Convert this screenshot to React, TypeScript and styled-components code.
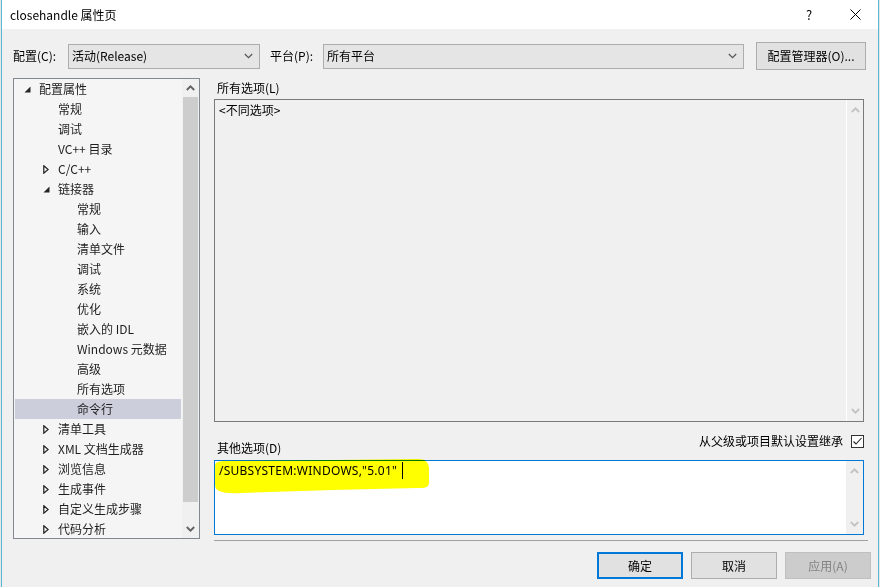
import React from 'react';
import styled, { createGlobalStyle } from 'styled-components';

const GlobalStyle = createGlobalStyle`
  html, body {
    margin: 0;
    padding: 0;
    background: #e6e6e6;
  }
  body {
    font-family: "Noto Sans CJK SC", "Noto Sans", sans-serif;
    font-size: 12px;
    color: #000;
  }
`;

const Screen = styled.div`
  width: 880px;
  height: 587px;
  overflow: hidden;
  display: flex;
  background: #e6e6e6;
`;

const Window = styled.div`
  margin-left: 1px;
  width: 878px;
  height: 587px;
  box-sizing: border-box;
  border-left: 1px solid #5ab7d8;
  border-right: 1px solid #5ab7d8;
  display: flex;
  flex-direction: column;
  background: #f0f0f0;
`;

const TitleBar = styled.div`
  height: 29px;
  flex-shrink: 0;
  background: #fff;
  display: flex;
  align-items: center;
  padding-left: 8px;
`;

const Title = styled.span`
  flex: 1;
  line-height: 18px;
  color: #000;
`;

const CaptionButton = styled.div`
  width: 46px;
  height: 29px;
  display: flex;
  align-items: center;
  justify-content: center;
  font-size: 13px;
  color: #000;
`;

const Body = styled.div`
  flex: 1;
  padding: 13px 7px 0 11px;
`;

const TopRow = styled.div`
  display: flex;
  align-items: center;
  height: 28px;
`;

const FieldLabel = styled.span<{ $w: number; $ml?: number }>`
  width: ${(p) => p.$w}px;
  margin-left: ${(p) => p.$ml || 0}px;
  line-height: 18px;
`;

const Combo = styled.div<{ $w: number }>`
  width: ${(p) => p.$w}px;
  height: 25px;
  box-sizing: border-box;
  border: 1px solid #adadad;
  background: #e5e5e5;
  display: flex;
  align-items: center;
  padding: 0 6px 0 3px;
  line-height: 18px;

  span {
    flex: 1;
  }
`;

const PushButton = styled.div<{ $w: number; $h: number; $primary?: boolean; $disabled?: boolean }>`
  width: ${(p) => p.$w}px;
  height: ${(p) => p.$h}px;
  box-sizing: border-box;
  border: ${(p) => (p.$primary ? '2px solid #0078d7' : p.$disabled ? '1px solid #bfbfbf' : '1px solid #adadad')};
  background: ${(p) => (p.$disabled ? '#cccccc' : '#e1e1e1')};
  color: ${(p) => (p.$disabled ? '#838383' : '#000')};
  display: flex;
  align-items: center;
  justify-content: center;
  line-height: 18px;
`;

const Main = styled.div`
  display: flex;
  gap: 14px;
  margin-top: 8px;
`;

const Tree = styled.div`
  width: 187px;
  height: 461px;
  box-sizing: border-box;
  border: 1px solid #828790;
  background: #f5f5f5;
  display: flex;
`;

const TreeList = styled.div`
  flex: 1;
  padding: 0 1px;
  overflow: hidden;
`;

const TreeRow = styled.div<{ $level: number; $selected?: boolean }>`
  height: 20px;
  display: flex;
  align-items: center;
  padding-left: ${(p) => 9 + p.$level * 19}px;
  background: ${(p) => (p.$selected ? '#cccedb' : 'transparent')};
  color: #1e1e1e;
  line-height: 20px;
  white-space: nowrap;
`;

const Expander = styled.span`
  width: 15px;
  height: 20px;
  display: flex;
  align-items: center;
  flex-shrink: 0;
`;

const ScrollBar = styled.div<{ $light?: boolean }>`
  width: 17px;
  flex-shrink: 0;
  box-sizing: border-box;
  background: #f0f0f0;
  display: flex;
  flex-direction: column;
  border-left: ${(p) => (p.$light ? '1px solid #fff' : 'none')};
`;

const ScrollArrow = styled.div`
  height: 20px;
  flex-shrink: 0;
  display: flex;
  align-items: center;
  justify-content: center;
`;

const Thumb = styled.div`
  height: 405px;
  margin: 0 1px 0 1px;
  background: #cdcdcd;
`;

const Spacer = styled.div`
  flex: 1;
`;

const RightCol = styled.div`
  width: 650px;
  display: flex;
  flex-direction: column;
`;

const SectionLabel = styled.div`
  height: 21px;
  box-sizing: border-box;
  padding: 1px 0 0 3px;
  line-height: 18px;
`;

const EditBox = styled.div<{ $h: number; $focused?: boolean }>`
  position: relative;
  height: ${(p) => p.$h}px;
  box-sizing: border-box;
  border: 1px solid ${(p) => (p.$focused ? '#0078d7' : '#7a7a7a')};
  background: ${(p) => (p.$focused ? '#fff' : '#f0f0f0')};
  display: flex;
`;

const EditText = styled.div<{ $latin?: boolean }>`
  flex: 1;
  padding: 1px 0 0 4px;
  line-height: 18px;
  white-space: nowrap;
  letter-spacing: ${(p) => (p.$latin ? '0.25px' : '0')};
  font-family: ${(p) => (p.$latin ? '"Noto Sans", "Noto Sans CJK SC", sans-serif' : 'inherit')};
`;

const Caret = styled.span`
  display: inline-block;
  width: 1px;
  height: 17px;
  margin-left: 5px;
  vertical-align: -4px;
  background: #000;
`;

const Highlight = styled.svg`
  position: absolute;
  left: -2px;
  top: -3px;
  pointer-events: none;
  mix-blend-mode: multiply;
  z-index: 2;
`;

const MiddleRow = styled.div`
  height: 38px;
  display: flex;
  justify-content: space-between;
`;

const BottomLabel = styled.div`
  align-self: flex-end;
  padding: 0 0 3px 3px;
  line-height: 18px;
`;

const InheritGroup = styled.label`
  align-self: center;
  display: flex;
  align-items: center;
  gap: 8px;
  line-height: 18px;
`;

const CheckBox = styled.span`
  width: 13px;
  height: 13px;
  box-sizing: border-box;
  border: 1px solid #333;
  background: #fff;
  display: flex;
`;

const Separator = styled.div`
  width: 654px;
  height: 1px;
  margin-top: 5px;
  background: #a0a0a0;
`;

const ButtonRow = styled.div`
  display: flex;
  justify-content: flex-end;
  gap: 8px;
  margin-top: 11px;
`;

const Chevron = ({ up, color, bold }: { up?: boolean; color: string; bold?: boolean }) => (
  <svg width="9" height="6" viewBox="0 0 9 6">
    <polyline
      points={up ? '0.8,5 4.5,1.3 8.2,5' : '0.8,1 4.5,4.7 8.2,1'}
      fill="none"
      stroke={color}
      strokeWidth={bold ? 1.8 : 1.2}
    />
  </svg>
);

const Expanded = () => (
  <svg width="7" height="7" viewBox="0 0 7 7">
    <polygon points="6.5,0.5 6.5,6.5 0.5,6.5" fill="#262626" />
  </svg>
);

const Collapsed = () => (
  <svg width="6" height="9" viewBox="0 0 6 9">
    <polygon points="0.8,0.8 5.2,4.5 0.8,8.2" fill="none" stroke="#1e1e1e" strokeWidth="1.2" />
  </svg>
);

type Node = { label: string; level: number; state?: 'open' | 'closed'; selected?: boolean };

const nodes: Node[] = [
  { label: '配置属性', level: 0, state: 'open' },
  { label: '常规', level: 1 },
  { label: '调试', level: 1 },
  { label: 'VC++ 目录', level: 1 },
  { label: 'C/C++', level: 1, state: 'closed' },
  { label: '链接器', level: 1, state: 'open' },
  { label: '常规', level: 2 },
  { label: '输入', level: 2 },
  { label: '清单文件', level: 2 },
  { label: '调试', level: 2 },
  { label: '系统', level: 2 },
  { label: '优化', level: 2 },
  { label: '嵌入的 IDL', level: 2 },
  { label: 'Windows 元数据', level: 2 },
  { label: '高级', level: 2 },
  { label: '所有选项', level: 2 },
  { label: '命令行', level: 2, selected: true },
  { label: '清单工具', level: 1, state: 'closed' },
  { label: 'XML 文档生成器', level: 1, state: 'closed' },
  { label: '浏览信息', level: 1, state: 'closed' },
  { label: '生成事件', level: 1, state: 'closed' },
  { label: '自定义生成步骤', level: 1, state: 'closed' },
  { label: '代码分析', level: 1, state: 'closed' },
];

const App = () => (
  <>
    <GlobalStyle />
    <Screen>
      <Window>
        <TitleBar>
          <Title>closehandle 属性页</Title>
          <CaptionButton>?</CaptionButton>
          <CaptionButton>
            <svg width="11" height="11" viewBox="0 0 11 11">
              <path d="M0.5 0.5 L10.5 10.5 M10.5 0.5 L0.5 10.5" stroke="#000" strokeWidth="1" />
            </svg>
          </CaptionButton>
        </TitleBar>

        <Body>
          <TopRow>
            <FieldLabel $w={55}>配置(C):</FieldLabel>
            <Combo $w={192}>
              <span>活动(Release)</span>
              <Chevron color="#555" />
            </Combo>
            <FieldLabel $w={53} $ml={10}>平台(P):</FieldLabel>
            <Combo $w={421}>
              <span>所有平台</span>
              <Chevron color="#555" />
            </Combo>
            <span style={{ width: 12 }} />
            <PushButton $w={110} $h={28}>配置管理器(O)...</PushButton>
          </TopRow>

          <Main>
            <Tree>
              <TreeList>
                {nodes.map((n, i) => (
                  <TreeRow key={i} $level={n.level} $selected={n.selected}>
                    <Expander>
                      {n.state === 'open' && <Expanded />}
                      {n.state === 'closed' && <Collapsed />}
                    </Expander>
                    {n.label}
                  </TreeRow>
                ))}
              </TreeList>
              <ScrollBar>
                <ScrollArrow style={{ height: 18 }}>
                  <Chevron up bold color="#606060" />
                </ScrollArrow>
                <Thumb />
                <Spacer />
                <ScrollArrow style={{ height: 18 }}>
                  <Chevron bold color="#606060" />
                </ScrollArrow>
              </ScrollBar>
            </Tree>

            <RightCol>
              <SectionLabel>所有选项(L)</SectionLabel>
              <EditBox $h={323}>
                <EditText>&lt;不同选项&gt;</EditText>
                <ScrollBar $light>
                  <ScrollArrow>
                    <Chevron up bold color="#c2c2c2" />
                  </ScrollArrow>
                  <Spacer />
                  <ScrollArrow>
                    <Chevron bold color="#c2c2c2" />
                  </ScrollArrow>
                </ScrollBar>
              </EditBox>

              <MiddleRow>
                <BottomLabel>其他选项(D)</BottomLabel>
                <InheritGroup>
                  从父级或项目默认设置继承
                  <CheckBox>
                    <svg width="11" height="11" viewBox="0 0 11 11">
                      <polyline points="1.5,5.5 4,8 9.5,2" fill="none" stroke="#222" strokeWidth="1.1" />
                    </svg>
                  </CheckBox>
                </InheritGroup>
              </MiddleRow>

              <EditBox $h={75} $focused>
                <EditText $latin>
                  /SUBSYSTEM:WINDOWS,"5.01"
                  <Caret />
                </EditText>
                <ScrollBar>
                  <ScrollArrow>
                    <Chevron up bold color="#c2c2c2" />
                  </ScrollArrow>
                  <Spacer />
                  <ScrollArrow>
                    <Chevron bold color="#c2c2c2" />
                  </ScrollArrow>
                </ScrollBar>
                <Highlight width="220" height="38" viewBox="0 0 220 38">
                  <path
                    d="M2 8 C2 4 5 3 14 3 L120 2 L205 1 C212 1 216 4 216 11 L216 24 C216 30 212 30 204 30 L120 32 L28 35 C9 36 2 33 2 27 Z"
                    fill="#ffff00"
                  />
                </Highlight>
              </EditBox>

              <Separator />
            </RightCol>
          </Main>

          <ButtonRow>
            <PushButton $w={86} $h={27} $primary>确定</PushButton>
            <PushButton $w={86} $h={27}>取消</PushButton>
            <PushButton $w={86} $h={27} $disabled>应用(A)</PushButton>
          </ButtonRow>
        </Body>
      </Window>
    </Screen>
  </>
);

export default App;
